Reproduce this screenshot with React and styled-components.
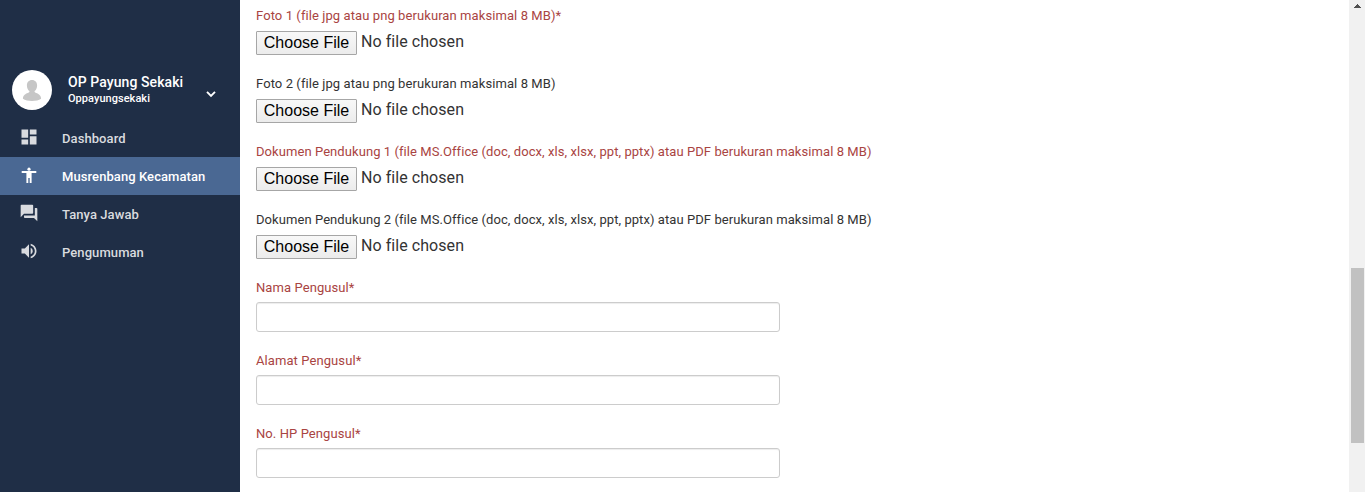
import React from "react";
import styled, { createGlobalStyle } from "styled-components";
import { MdDashboard, MdQuestionAnswer, MdVolumeUp } from "react-icons/md";

const GlobalStyle = createGlobalStyle`
  *, *::before, *::after { box-sizing: border-box; }
  html, body { margin: 0; height: 100%; overflow: hidden; }
  body { background: #fff; font-family: Roboto, "Liberation Sans", sans-serif; }
`;

const Page = styled.div`
  display: flex;
  height: 100vh;
  overflow: hidden;
`;

const Sidebar = styled.aside`
  flex: 0 0 240px;
  padding-top: 70px;
  background: #1f2e46;
  color: #fff;
  letter-spacing: 0.08px;
`;

const Profile = styled.div`
  display: flex;
  height: 49px;
  padding-left: 12px;
`;

const Avatar = styled.svg`
  width: 40px;
  height: 40px;
`;

const Identity = styled.div`
  width: 134px;
  margin-left: 16px;
  padding-top: 3px;
  font-weight: 500;
`;

const UserName = styled.div`
  font-size: 14px;
  line-height: 18px;
  white-space: nowrap;
`;

const UserLogin = styled.div`
  font-size: 11px;
  line-height: 15px;
  letter-spacing: 0.04px;
`;

const ProfileArrow = styled.svg`
  width: 18px;
  height: 18px;
  margin-top: 15px;
`;

const Menu = styled.nav`
  display: flex;
  flex-direction: column;
`;

const MenuItem = styled.a`
  display: flex;
  align-items: center;
  gap: 23px;
  height: 38px;
  padding-left: 19px;
  background: ${(p) => (p.$active ? "#4a6893" : "transparent")};
  color: ${(p) => (p.$active ? "#fff" : "#d9dbdf")};
  font-size: 13px;
  font-weight: 500;

  svg {
    width: 20px;
    height: 20px;
    margin-top: -2px;
  }
`;

const Form = styled.main`
  flex: 1;
  padding: 6px 0 0 16px;
`;

const Field = styled.div`
  margin-bottom: 19px;
`;

const Label = styled.label`
  display: block;
  font-size: 13px;
  line-height: 19px;
  letter-spacing: ${(p) => (p.$long ? "0.07px" : "0.085px")};
  white-space: nowrap;
  color: ${(p) => (p.$required ? "#a94442" : "#333")};
`;

const FileRow = styled.div`
  display: flex;
  gap: 4px;
  height: 24px;
  margin-top: 6px;
`;

const FileButton = styled.button`
  width: 101px;
  height: 24px;
  padding: 0;
  border: 1px solid #a6a6a6;
  border-radius: 1px;
  background: linear-gradient(#f8f8f8, #ececec);
  color: #000;
  font: 16px/20px "Liberation Sans", Arial, sans-serif;
  white-space: nowrap;
`;

const FileStatus = styled.span`
  color: #333;
  font-size: 16px;
  line-height: 21px;
  letter-spacing: 0.06px;
`;

const TextInput = styled.input`
  display: block;
  width: 524px;
  height: 30px;
  margin-top: 5px;
  border: 1px solid #ccc;
  border-radius: 3px;
  background: #fff;
  box-shadow: inset 0 1px 1px rgba(0, 0, 0, 0.075);
  outline: none;
`;

const Scrollbar = styled.div`
  flex: 0 0 16px;
  display: flex;
  flex-direction: column;
  align-items: center;
  background: #f1f1f1;
`;

const ScrollArrow = styled.svg`
  width: 16px;
  height: 17px;
`;

const ScrollThumb = styled.div`
  width: 13px;
  height: 175px;
  margin: 251px 0 0 1px;
  background: #c1c1c1;
`;

const PersonIcon = () => (
  <svg viewBox="0 0 20 20" fill="currentColor">
    <circle cx="10" cy="4.200" r="1.600" />
    <path d="M2.700 6h14.600v1.900h-4.700V18h-1.900v-5H9.300v5H7.400V7.900H2.700z" />
  </svg>
);

const menu = [
  { icon: MdDashboard, text: "Dashboard" },
  { icon: PersonIcon, text: "Musrenbang Kecamatan", active: true },
  { icon: MdQuestionAnswer, text: "Tanya Jawab" },
  { icon: MdVolumeUp, text: "Pengumuman" },
];

const files = [
  { label: "Foto 1 (file jpg atau png berukuran maksimal 8 MB)*", required: true },
  { label: "Foto 2 (file jpg atau png berukuran maksimal 8 MB)" },
  {
    label: "Dokumen Pendukung 1 (file MS.Office (doc, docx, xls, xlsx, ppt, pptx) atau PDF berukuran maksimal 8 MB)",
    required: true,
    long: true,
  },
  {
    label: "Dokumen Pendukung 2 (file MS.Office (doc, docx, xls, xlsx, ppt, pptx) atau PDF berukuran maksimal 8 MB)",
    long: true,
  },
];

const inputs = ["Nama Pengusul*", "Alamat Pengusul*", "No. HP Pengusul*"];

export default function App() {
  return (
    <>
      <GlobalStyle />
      <Page>
        <Sidebar>
          <Profile>
            <Avatar viewBox="0 0 40 40">
              <circle cx="20" cy="20" r="20" fill="#fff" />
              <path
                fill="#c6c6c6"
                d="M20 10c-3.200 0-5.100 2.300-5.100 5.400 0 2.300 1 4.500 2.500 5.700v1c-1.200 1.300-6.500 1.600-6.500 6.700C13 30.400 16.500 31 20 31s7-.6 9.100-2.200c0-5.100-5.300-5.400-6.500-6.700v-1c1.500-1.200 2.500-3.400 2.500-5.700C25.100 12.300 23.200 10 20 10z"
              />
            </Avatar>
            <Identity>
              <UserName>OP Payung Sekaki</UserName>
              <UserLogin>Oppayungsekaki</UserLogin>
            </Identity>
            <ProfileArrow viewBox="0 0 18 18">
              <path d="M5 6.900l4 4 4-4" fill="none" stroke="currentColor" strokeWidth="1.900" />
            </ProfileArrow>
          </Profile>
          <Menu>
            {menu.map(({ icon: Icon, text, active }) => (
              <MenuItem key={text} $active={active}>
                <Icon />
                {text}
              </MenuItem>
            ))}
          </Menu>
        </Sidebar>
        <Form>
          {files.map(({ label, required, long }) => (
            <Field key={label}>
              <Label $required={required} $long={long}>
                {label}
              </Label>
              <FileRow>
                <FileButton type="button">Choose File</FileButton>
                <FileStatus>No file chosen</FileStatus>
              </FileRow>
            </Field>
          ))}
          {inputs.map((label) => (
            <Field key={label}>
              <Label $required>{label}</Label>
              <TextInput type="text" aria-label={label} />
            </Field>
          ))}
        </Form>
        <Scrollbar>
          <ScrollArrow viewBox="0 0 16 17" shapeRendering="crispEdges">
            <path fill="#505050" d="M8 4h1v1h1v1h1v1h1v1H5V7h1V6h1V5h1z" />
          </ScrollArrow>
          <ScrollThumb />
        </Scrollbar>
      </Page>
    </>
  );
}
